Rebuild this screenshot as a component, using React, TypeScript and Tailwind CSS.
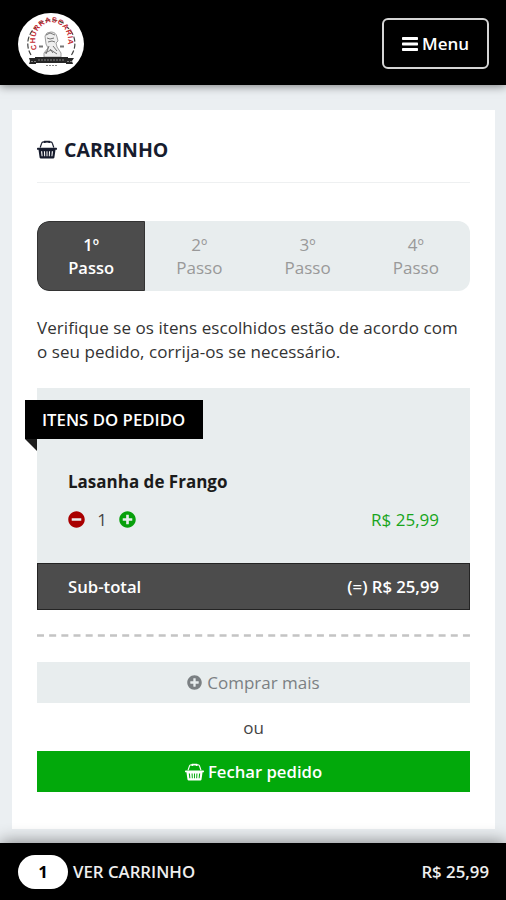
import { FaMinusCircle, FaPlusCircle } from "react-icons/fa";

const steps = ["1º", "2º", "3º", "4º"];

const order = {
  name: "Lasanha de Frango",
  quantity: 1,
  price: "R$ 25,99",
};

const BarsIcon = () => {
  return (
    <svg viewBox="0 0 16 14" className="h-[14px] w-4" fill="currentColor">
      <rect width="16" height="3" rx="0.7" />
      <rect y="5.5" width="16" height="3" rx="0.7" />
      <rect y="11" width="16" height="3" rx="0.7" />
    </svg>
  );
};

const BasketIcon = ({ className }: { className: string }) => {
  return (
    <svg viewBox="0 0 20 19" className={className} fill="currentColor">
      <path
        d="M3.2 7.5 4.6 3.4Q5 2.1 6.5 1.9H13.5Q15 2.1 15.4 3.4L16.8 7.5"
        fill="none"
        stroke="currentColor"
        strokeWidth="1.2"
      />
      <path d="M7.2.8h5.6l.6 2.3h-1.7l-.6-.8H8.9l-.6.8H6.6z" />
      <path
        fillRule="evenodd"
        d="M0 8.4Q0 7.8.7 7.8h18.6q.7 0 .7.6v.8q0 .6-.7.6h-.8l-1.1 7.6q-.2 1.1-1.3 1.1H3.9q-1.1 0-1.3-1.1L1.5 9.800H.7Q0 9.800 0 9.200zM4 11.200l.6 5h1l-.4-5zM6.900 11.200l.3 5h1l-.2-5zM9.500 11.200v5h1v-5zM12 11.200l-.2 5h1l.3-5zM14.800 11.200l-.4 5h1l.6-5z"
      />
    </svg>
  );
};

const Logo = () => {
  return (
    <svg viewBox="0 0 66 62" className="h-[62px] w-[66px]">
      <ellipse cx="33" cy="31" rx="33" ry="31" fill="#fff" />
      <path
        d="M13 42A22 21.500 0 0 1 18 14M53.500 42A22 21.500 0 0 0 49 14M21 10.500A22 21 0 0 1 46 10.500"
        fill="none"
        stroke="#444"
        strokeWidth="1.200"
        strokeDasharray="5 2"
      />
      <path id="arc" d="M19 36A16.500 18.500 0 1 1 48.500 36" fill="none" />
      <text fill="#c22a32" fontSize="7.5" fontWeight="700" className="font-['Liberation_Sans',sans-serif]">
        <textPath href="#arc" textLength="67">
          CHURRASCARIA
        </textPath>
      </text>
      <path
        d="M27 23q1-4 6-4 5 0 6 5l1 4-2 2 1 4 4 6v4H26v-4l4-5-2-4z"
        fill="#eee"
        stroke="#888"
        strokeWidth=".8"
      />
      <path
        d="M28 22l4-2 5 2M29 25l3 1 4-1M30 29l4-1 3 1M31 33l-3 8M35 33l4 5M32 36l3 4M27 40l6-3 6 4"
        fill="none"
        stroke="#666"
        strokeWidth=".9"
      />
      <path d="M21 33.500h4M42 33.500h4" stroke="#777" strokeWidth="2" />
      <path d="M11 45h6v-1h33v1h6l-2 3 1 3h-7v-1H18v1h-7l1-3z" fill="#262626" />
      <path d="M13 48.500h5M20 47h27M49 48.500h5" stroke="#999" strokeWidth=".8" strokeDasharray="2 1" />
      <path d="M28 52.500h11" stroke="#888" strokeWidth="1.200" strokeDasharray="2 1" />
    </svg>
  );
};

const Header = () => {
  return (
    <header className="relative z-10 flex h-[85px] shrink-0 items-center justify-between bg-black pt-0.5 pr-[17px] pl-[18px] shadow-[0_1px_9px_rgba(0,0,0,0.5)]">
      <Logo />
      <button className="flex h-[51px] w-[107px] items-center justify-center gap-1 rounded-md border-2 border-[#d5d5d5] text-[17px] font-semibold text-white">
        <BarsIcon />
        Menu
      </button>
    </header>
  );
};

const Steps = () => {
  return (
    <div className="mt-[38px] grid h-[70px] grid-cols-4 overflow-hidden rounded-xl bg-[#e8edee] text-center text-[17px] leading-[23px] text-[#999]">
      {steps.map((step, idx) => (
        <div
          key={step}
          className={
            idx === 0
              ? "border border-[#333] rounded-l-xl bg-[#4c4c4c] pt-[11px] text-[16.5px] font-semibold text-white"
              : "pt-3"
          }
        >
          {step}
          <br />
          Passo
        </div>
      ))}
    </div>
  );
};

const OrderItems = () => {
  return (
    <section className="mt-[25px] bg-[#e8edee]">
      <div className="h-[175px] pt-3">
        <div className="relative -ml-3 flex h-[39px] w-[178px] items-center bg-black pl-[17px] text-[16.8px] font-semibold text-white">
          <span className="whitespace-nowrap">ITENS DO PEDIDO</span>
          {/* folded corner of the ribbon */}
          <svg viewBox="0 0 12 12" className="absolute top-full left-0 size-3">
            <path d="M0 0h12v12z" fill="#1c1c1c" />
          </svg>
        </div>
        <div className="px-[31px] pt-[31px]">
          <h2 className="text-[17px] leading-6 font-bold text-[#1b1b1b]">{order.name}</h2>
          <div className="mt-[13px] flex h-6 items-center text-[17px]">
            <FaMinusCircle className="size-[17px] text-[#a90000]" />
            <span className="w-[34px] pt-px text-center text-[#444]">{order.quantity}</span>
            <FaPlusCircle className="size-[17px] text-[#08a00c]" />
            <span className="ml-auto pt-px text-[#18a51c]">{order.price}</span>
          </div>
        </div>
      </div>
      <div className="flex h-[47px] items-center justify-between border border-[#242424] bg-[#4c4c4c] px-[30px] pt-px text-[16.7px] font-semibold text-white">
        <span>Sub-total</span>
        <span>(=) {order.price}</span>
      </div>
    </section>
  );
};

const CartBar = () => {
  return (
    <footer className="relative z-10 flex h-[57px] shrink-0 items-center bg-black pr-[17px] pl-[18px] text-[16.8px] font-semibold text-[#eee] shadow-[0_-1px_16px_rgba(0,0,0,0.45)]">
      <span className="flex h-[34px] w-[50px] items-center justify-center rounded-full bg-white font-bold text-black">
        {order.quantity}
      </span>
      <span className="ml-[5px]">VER CARRINHO</span>
      <span className="ml-auto">{order.price}</span>
    </footer>
  );
};

export default function App() {
  return (
    <div className="flex h-[900px] w-[506px] flex-col overflow-hidden bg-[#ebeff2] font-['Open_Sans',sans-serif]">
      <Header />
      <main className="mr-[11px] mt-[25px] mb-[14px] ml-3 flex-1 bg-white px-[25px] pt-[25px]">
        <h1 className="flex h-[48px] gap-[7px] border-b border-[#eef0f1] text-[19.5px] leading-[30px] font-bold text-[#171c2e]">
          <BasketIcon className="mt-[5px] h-[19px] w-5" />
          CARRINHO
        </h1>
        <Steps />
        <p className="mt-[25px] text-[17px] leading-[23.5px] tracking-[0.06px] whitespace-nowrap text-[#333]">
          Verifique se os itens escolhidos estão de acordo com
          <br />o seu pedido, corrija-os se necessário.
        </p>
        <OrderItems />
        <svg className="mt-6 block h-[3px] w-full">
          <path d="M0 1.5H433" stroke="#c4c4c4" strokeWidth="2.5" strokeDasharray="7 5.17" />
        </svg>
        <button className="mt-[25px] flex h-[41px] w-full items-center justify-center gap-[5px] bg-[#e8edee] text-[17px] text-[#7b8083]">
          <FaPlusCircle className="size-[15px]" />
          Comprar mais
        </button>
        <p className="flex h-12 items-center justify-center pt-px text-[17px] text-[#444]">ou</p>
        <button className="flex h-[41px] w-full items-center justify-center gap-1 bg-[#02a90b] text-[16.7px] font-semibold text-white">
          <BasketIcon className="h-[18px] w-[19px]" />
          Fechar pedido
        </button>
      </main>
      <CartBar />
    </div>
  );
}
